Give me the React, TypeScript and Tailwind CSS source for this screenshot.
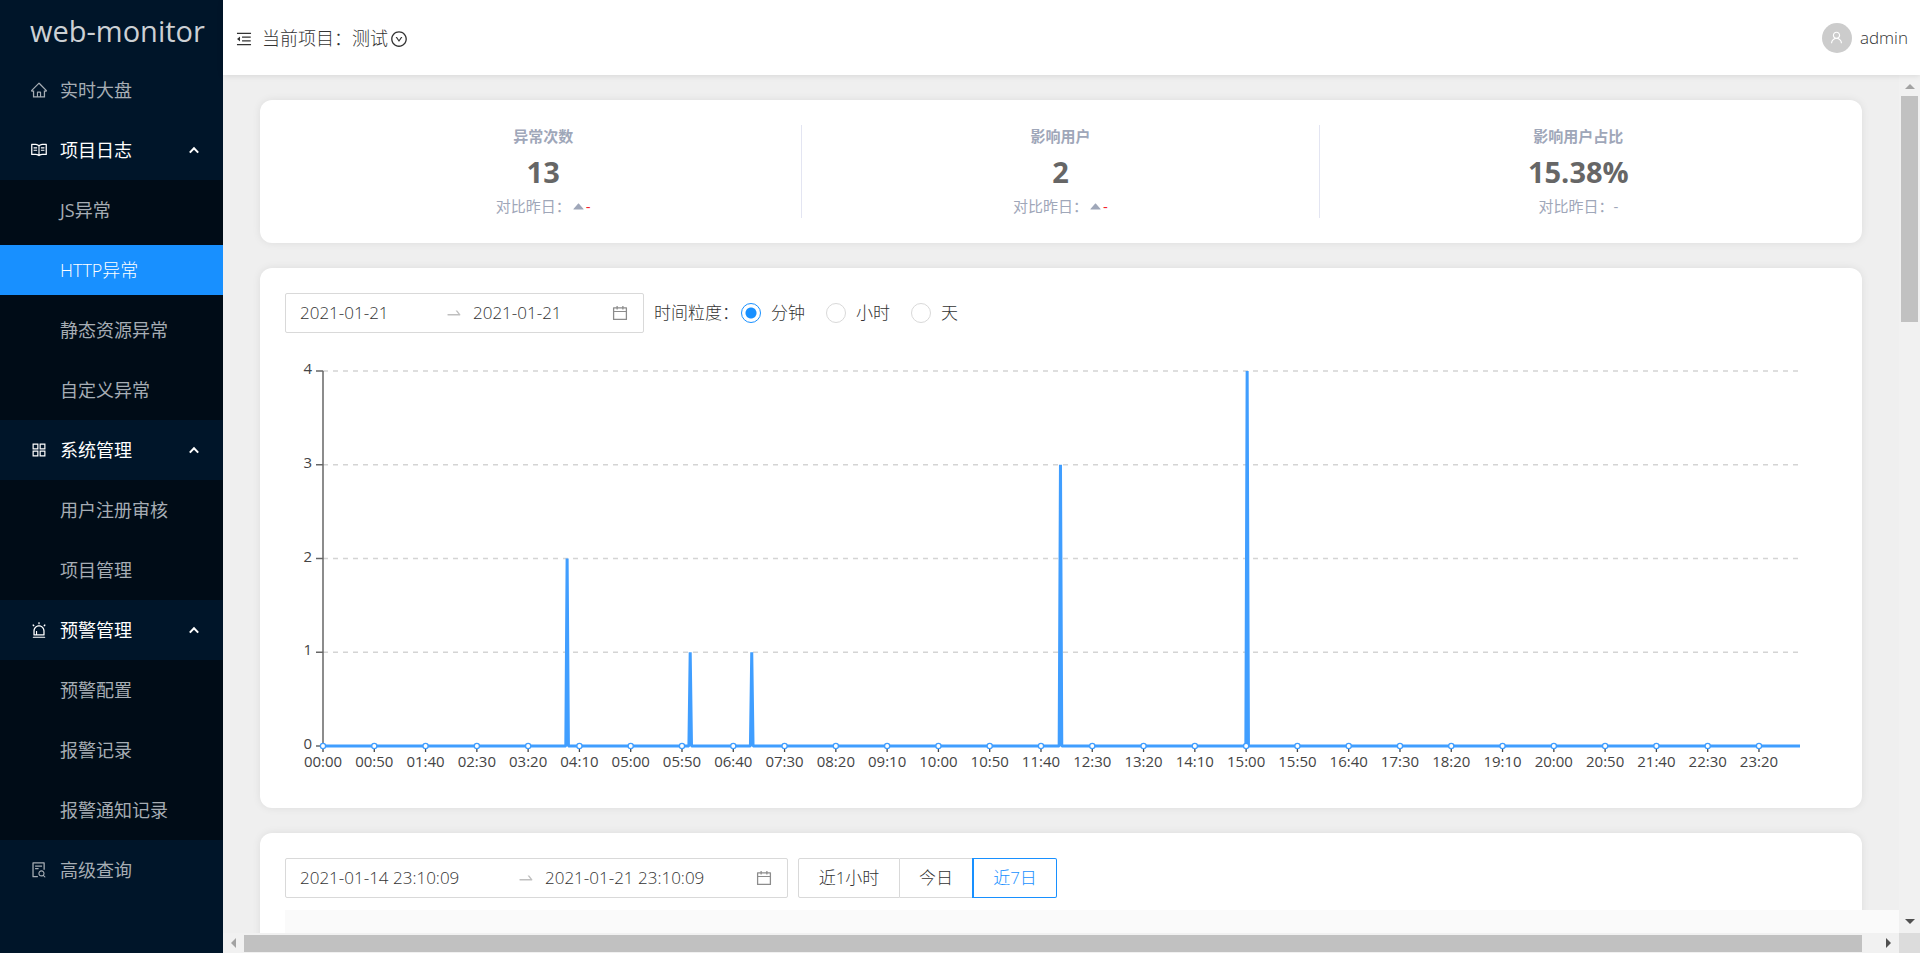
import React from "react";
import {
  AiFillCaretUp,
  AiOutlineAlert,
  AiOutlineAppstore,
  AiOutlineCalendar,
  AiOutlineDownCircle,
  AiOutlineFileSearch,
  AiOutlineHome,
  AiOutlineMenuFold,
  AiOutlineRead,
  AiOutlineSwapRight,
  AiOutlineUser,
} from "react-icons/ai";
import type { IconType } from "react-icons";

type Group = { label: string; icon: IconType; children?: string[] };

const MENU: Group[] = [
  { label: "实时大盘", icon: AiOutlineHome },
  { label: "项目日志", icon: AiOutlineRead, children: ["JS异常", "HTTP异常", "静态资源异常", "自定义异常"] },
  { label: "系统管理", icon: AiOutlineAppstore, children: ["用户注册审核", "项目管理"] },
  { label: "预警管理", icon: AiOutlineAlert, children: ["预警配置", "报警记录", "报警通知记录"] },
  { label: "高级查询", icon: AiOutlineFileSearch },
];

const ACTIVE = "HTTP异常";

function Sidebar() {
  return (
    <aside className="w-[223px] shrink-0 overflow-hidden bg-[#001529] font-normal text-[#a6adb4]">
      <div className="flex h-[60px] items-center whitespace-nowrap pl-[30px] pt-0.5 text-[29px] text-[#ccd0d4]">
        web-monitor
      </div>
      <nav>
        <ul>
          {MENU.map(({ label, icon: Icon, children }) => (
            <li key={label}>
              {children ? (
                <button type="button" className="flex h-[60px] w-full items-center gap-3 pl-[30px] pr-6 text-white">
                  <Icon size={18} />
                  <span className="grow text-left">{label}</span>
                  <svg viewBox="0 0 10 8" className="h-2 w-[10px]" fill="none" stroke="currentColor" strokeWidth="2">
                    <path d="M0.8 6.6 5 2.2 9.2 6.6" />
                  </svg>
                </button>
              ) : (
                <a href="#" className="flex h-[60px] items-center gap-3 pl-[30px]">
                  <Icon size={18} />
                  {label}
                </a>
              )}
              {children && (
                <ul className="bg-[#000c17]">
                  {children.map((item) => (
                    <li key={item} className="py-[5px]">
                      <a
                        href="#"
                        className={
                          item === ACTIVE
                            ? "flex h-[50px] items-center bg-[#1890ff] pl-[60px] font-light text-white"
                            : "flex h-[50px] items-center pl-[60px]"
                        }
                      >
                        {item}
                      </a>
                    </li>
                  ))}
                </ul>
              )}
            </li>
          ))}
        </ul>
      </nav>
    </aside>
  );
}

function Header() {
  return (
    <header className="z-10 flex h-[75px] shrink-0 items-center justify-between bg-white px-3 shadow-[0_1px_6px_rgba(0,0,0,0.1)]">
      <div className="flex items-center pt-0.5">
        <button type="button" aria-label="收起菜单" className="mr-[9px]">
          <AiOutlineMenuFold size={18} />
        </button>
        <span>当前项目：</span>
        <button type="button" className="flex items-center gap-[2px]">
          测试
          <AiOutlineDownCircle size={18} />
        </button>
      </div>
      <button type="button" className="flex items-center gap-2">
        <span className="flex size-[30px] items-center justify-center rounded-full bg-[#ccc] text-white">
          <AiOutlineUser size={15} />
        </span>
        <span className="text-[17px]">admin</span>
      </button>
    </header>
  );
}

const STATS = [
  { title: "异常次数", value: "13", trend: true },
  { title: "影响用户", value: "2", trend: true },
  { title: "影响用户占比", value: "15.38%", trend: false },
];

const CARD = "rounded-xl bg-white shadow-[0_0_8px_rgba(0,0,0,0.08)]";

function Stats() {
  return (
    <section className={`${CARD} grid grid-cols-3 p-[25px]`}>
      {STATS.map(({ title, value, trend }) => (
        <div
          key={title}
          className="flex h-[93px] flex-col items-center border-r border-[#e3e5f2] text-[15px] text-[#9fa7b9] last:border-r-0"
        >
          <div className="font-bold leading-[22px]">{title}</div>
          <div className="text-[29px] font-bold leading-[50px] text-[#666]">{value}</div>
          <div className="flex items-center font-normal leading-[18px]">
            对比昨日：
            {trend && <AiFillCaretUp size={15} />}
            <span className={trend ? "text-[#f5222d]" : ""}>-</span>
          </div>
        </div>
      ))}
    </section>
  );
}

function RangePicker({ from, to, name, wide }: { from: string; to: string; name: string; wide?: boolean }) {
  const first = wide ? "w-[217px] bg-transparent outline-none" : "w-[145px] bg-transparent outline-none";
  const last = wide ? "w-[210px] bg-transparent outline-none" : "w-[138px] bg-transparent outline-none";
  return (
    <div className="flex h-10 items-center rounded-[2px] border border-[#d9d9d9] px-[14px]">
      <input aria-label={`${name}开始`} defaultValue={from} className={first} />
      <AiOutlineSwapRight size={18} className="mr-[10px] text-[#bfbfbf]" />
      <input aria-label={`${name}结束`} defaultValue={to} className={last} />
      <AiOutlineCalendar size={18} className="text-[#8c8c8c]" />
    </div>
  );
}

const X0 = 38;
const X1 = 1515;
const Y0 = 401;
const STEP = 93.75;
const perMinute = (X1 - X0) / 1440;
const SPIKES = [
  { minute: 238, count: 2 },
  { minute: 358, count: 1 },
  { minute: 418, count: 1 },
  { minute: 719, count: 3 },
  { minute: 901, count: 4 },
];
const TICKS = Array.from({ length: 29 }, (_, i) => i * 50);

function clock(minute: number) {
  const h = String(Math.floor(minute / 60)).padStart(2, "0");
  const m = String(minute % 60).padStart(2, "0");
  return `${h}:${m}`;
}

function Chart() {
  const line = SPIKES.map(({ minute, count }) => {
    const x = X0 + minute * perMinute;
    return `L${x - 1.3} ${Y0}L${x} ${Y0 - count * STEP}L${x + 1.3} ${Y0}`;
  }).join("");
  return (
    <svg viewBox="0 0 1552 438" className="block h-auto w-full font-normal" role="img" aria-label="异常次数趋势">
      {[0, 1, 2, 3, 4].map((n) => (
        <g key={n}>
          {n > 0 && (
            <path d={`M${X0} ${Y0 - n * STEP}H${X1}`} stroke="#d4d4d4" strokeWidth="1.5" strokeDasharray="5 5" />
          )}
          <path d={`M${X0 - 7} ${Y0 - n * STEP}H${X0}`} stroke="#666" strokeWidth="1.5" />
          <text x={X0 - 11} y={Y0 - n * STEP + 3} textAnchor="end" fontSize="15" fill="#444">
            {n}
          </text>
        </g>
      ))}
      <path d={`M${X0} ${Y0 - 4 * STEP}V${Y0}`} stroke="#666" strokeWidth="1.5" />
      {TICKS.map((t) => (
        <g key={t}>
          <path d={`M${X0 + t * perMinute} ${Y0}v6`} stroke="#444" strokeWidth="1.3" />
          <text x={X0 + t * perMinute} y={Y0 + 21} textAnchor="middle" fontSize="15" fill="#444">
            {clock(t)}
          </text>
        </g>
      ))}
      <path d={`M${X0} ${Y0}${line}H${X1}`} fill="none" stroke="#409eff" strokeWidth="3" strokeLinejoin="bevel" />
      {TICKS.map((t) => (
        <circle key={t} cx={X0 + t * perMinute} cy={Y0} r="2.6" fill="#fff" stroke="#409eff" strokeWidth="1.3" />
      ))}
    </svg>
  );
}

const UNITS = ["分钟", "小时", "天"];

function TrendCard() {
  return (
    <section className={`${CARD} p-[25px] text-[17px]`}>
      <div className="flex items-center">
        <RangePicker name="趋势" from="2021-01-21" to="2021-01-21" />
        <div className="ml-[10px] mr-0.5">时间粒度：</div>
        <div className="flex gap-[21px]">
          {UNITS.map((unit, i) => (
            <label key={unit} className="flex items-center gap-[10px]">
              <input
                type="radio"
                name="unit"
                defaultChecked={i === 0}
                className="size-5 appearance-none rounded-full border border-[#d9d9d9] bg-white checked:border-[#1890ff] checked:bg-[radial-gradient(circle,#1890ff_5px,#fff_6px)]"
              />
              {unit}
            </label>
          ))}
        </div>
      </div>
      <div className="mt-3">
        <Chart />
      </div>
    </section>
  );
}

function LogCard() {
  return (
    <section className={`${CARD} h-[300px] p-[25px] text-[17px]`}>
      <div className="flex items-start">
        <RangePicker name="日志" from="2021-01-14 23:10:09" to="2021-01-21 23:10:09" wide />
        <div className="ml-[10px] flex h-10">
          <button type="button" className="w-[102px] rounded-l-[2px] border border-[#d9d9d9]">
            近1小时
          </button>
          <button type="button" className="w-[72px] border-y border-[#d9d9d9]">
            今日
          </button>
          <button type="button" className="w-[85px] rounded-r-[2px] border border-l-2 border-[#1890ff] text-[#1890ff]">
            近7日
          </button>
        </div>
      </div>
      <div className="mt-3 h-[68px] w-[2000px] bg-[#fafafa]" />
    </section>
  );
}

function VerticalBar() {
  return (
    <div aria-hidden="true" className="flex w-[21px] shrink-0 flex-col items-center bg-[#f1f1f1] pb-[9px] pt-[9px]">
      <svg viewBox="0 0 10 5" className="h-[5px] w-[10px]" fill="#a3a3a3">
        <path d="M5 0 10 5H0z" />
      </svg>
      <div className="mt-[7px] h-[226px] w-[17px] bg-[#c1c1c1]" />
      <svg viewBox="0 0 10 5" className="mt-auto h-[5px] w-[10px]" fill="#505050">
        <path d="M0 0H10L5 5z" />
      </svg>
    </div>
  );
}

function HorizontalBar() {
  return (
    <div aria-hidden="true" className="flex h-5 shrink-0">
      <div className="flex grow items-center bg-[#f1f1f1] px-2">
        <svg viewBox="0 0 5 10" className="h-[10px] w-[5px]" fill="#a3a3a3">
          <path d="M5 0V10L0 5z" />
        </svg>
        <div className="ml-2 mr-6 h-[17px] grow bg-[#c1c1c1]" />
        <svg viewBox="0 0 5 10" className="h-[10px] w-[5px]" fill="#505050">
          <path d="M0 0V10L5 5z" />
        </svg>
      </div>
      <div className="w-[21px] bg-[#dcdcdc]" />
    </div>
  );
}

export default function App() {
  return (
    <div className="flex h-screen font-['Open_Sans','Noto_Sans_CJK_SC',sans-serif] text-[18px] font-light text-[#333]">
      <Sidebar />
      <div className="flex min-w-0 grow flex-col bg-[#efefef]">
        <Header />
        <div className="flex min-h-0 grow">
          <main className="flex min-w-0 grow flex-col gap-[25px] overflow-hidden px-[37px] pt-[25px]">
            <Stats />
            <TrendCard />
            <LogCard />
          </main>
          <VerticalBar />
        </div>
        <HorizontalBar />
      </div>
    </div>
  );
}
